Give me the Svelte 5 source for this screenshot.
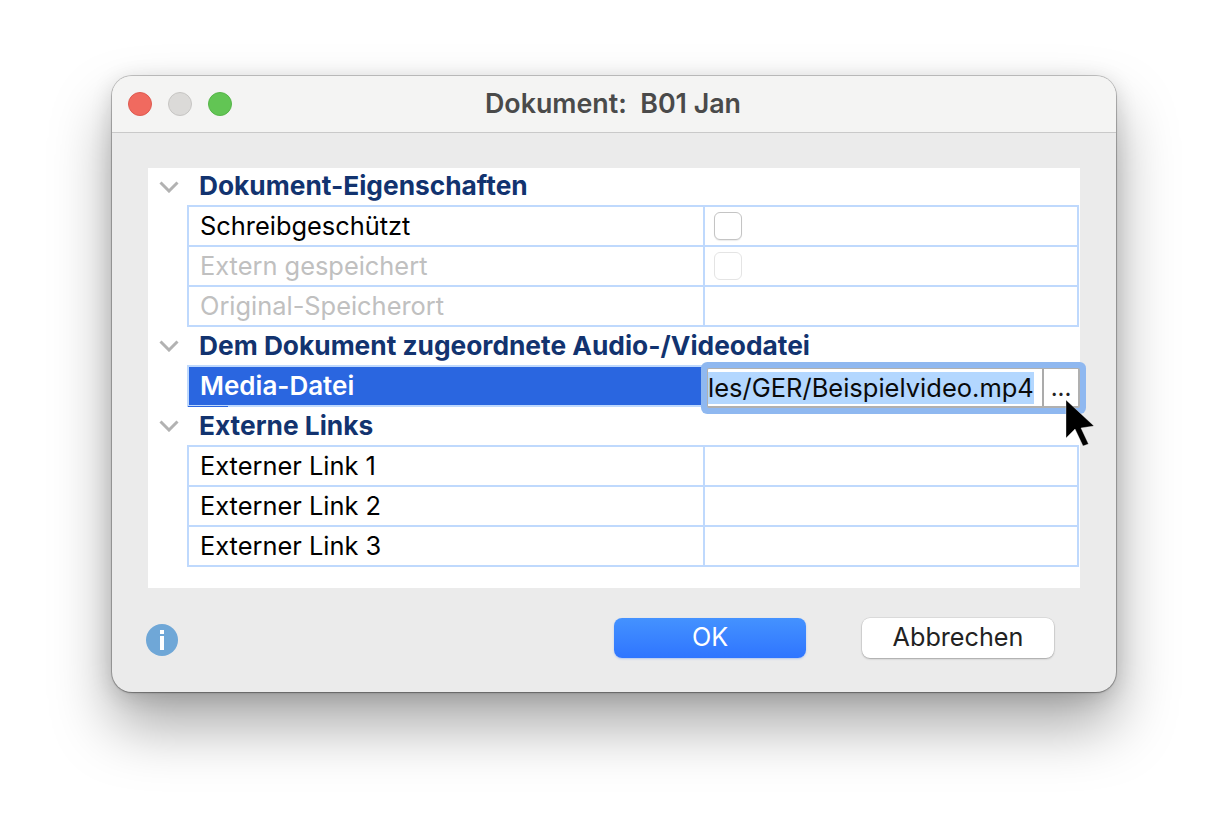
<script>
  const groups = [
    { title: 'Dokument-Eigenschaften', rows: [
      { label: 'Schreibgeschützt', check: true },
      { label: 'Extern gespeichert', check: true, off: true },
      { label: 'Original-Speicherort', off: true }
    ]},
    { title: 'Dem Dokument zugeordnete Audio-/Videodatei', rows: [
      { label: 'Media-Datei', active: true }
    ]},
    { title: 'Externe Links', rows: [
      { label: 'Externer Link 1' },
      { label: 'Externer Link 2' },
      { label: 'Externer Link 3' }
    ]}
  ];
</script>

<div class="page">
  <div class="window">
    <header class="titlebar">
      <div class="lights">
        <span class="light red"></span>
        <span class="light gray"></span>
        <span class="light green"></span>
      </div>
      <div class="title">Dokument:  B01 Jan</div>
    </header>
    <main class="content">
      <section class="panel">
        {#each groups as g}
          <div class="grouphead">
            <svg class="chev" width="20" height="12" viewBox="0 0 20 12"><path d="M1.500 1.500 L10 10 L18.500 1.500" fill="none" stroke="#b2b2b2" stroke-width="3"/></svg>
            <span class="headtext">{g.title}</span>
          </div>
          <div class="table">
            {#each g.rows as r}
              <div class="row" class:off={r.off} class:active={r.active}>
                <div class="name">{r.label}</div>
                <div class="val">
                  {#if r.check}<span class="check"></span>{/if}
                </div>
                {#if r.active}
                  <span class="underline"></span>
                  <div class="editor">
                    <div class="field"><span class="sel">les/GER/Beispielvideo.mp4</span></div>
                    <div class="dots">...</div>
                  </div>
                  <svg class="cursor" width="32" height="50" viewBox="0 0 32 50"><path d="M2 1 V39 L11 30 L19 47 L24.500 45 L17 29 L30 27 Z" fill="#000" stroke="#fff" stroke-opacity=".35" stroke-width="1"/></svg>
                {/if}
              </div>
            {/each}
          </div>
        {/each}
      </section>
      <footer class="foot">
        <svg class="info" width="32" height="32" viewBox="0 0 32 32"><circle cx="16" cy="16" r="16" fill="#6fa7d7"/><rect x="14" y="6" width="4" height="4" fill="#fff"/><rect x="14" y="12" width="4" height="14" fill="#fff"/></svg>
        <div class="btns">
          <button class="btn ok">OK</button>
          <button class="btn cancel">Abbrechen</button>
        </div>
      </footer>
    </main>
  </div>
</div>

<style>
  :global(body) { margin: 0; background: #fff; }
  .page {
    width: 1228px; height: 840px; box-sizing: border-box; overflow: hidden;
    padding: 76px 112px 0;
    font-family: Inter, "Liberation Sans", sans-serif;
  }
  .window {
    width: 1004px; height: 616px; box-sizing: border-box;
    border-radius: 20px; background: #ebebeb; overflow: hidden;
    box-shadow: 0 0 0 1px rgba(0,0,0,.2), 0 1px 2px rgba(0,0,0,.25), 0 34px 60px rgba(0,0,0,.34), 0 4px 22px rgba(0,0,0,.14);
    display: flex; flex-direction: column;
  }
  .titlebar {
    height: 57px; flex: none; box-sizing: border-box; position: relative;
    background: #f4f4f3; border-bottom: 1px solid #c9c9c9;
    display: flex; align-items: center; justify-content: center;
  }
  .lights { position: absolute; left: 16px; top: 16px; display: flex; gap: 16px; }
  .light { width: 24px; height: 24px; border-radius: 50%; box-sizing: border-box; border: 1px solid; }
  .red { background: #f06a5f; border-color: #de5a50; }
  .gray { background: #dbdad8; border-color: #c6c5c3; }
  .green { background: #62c554; border-color: #55b548; }
  .title { font-size: 26.800px; font-weight: 600; color: #4a4a4a; white-space: pre; margin-top: -3px; margin-right: 2px; }
  .content { flex: 1; display: flex; flex-direction: column; padding: 35px 36px 0; }
  .panel { background: #fff; height: 420px; flex: none; padding-right: 1px; box-sizing: border-box; }
  .grouphead {
    height: 38px; display: flex; align-items: center; color: #12336f;
    font-size: 26.300px; font-weight: 700;
  }
  .grouphead:first-child { height: 37px; }
  .headtext { margin-top: -2px; }
  .chev { margin-left: 11px; margin-right: 20px; flex: none; }
  .table {
    margin-left: 39px; border: 2px solid #bfd9fd;
    display: flex; flex-direction: column; gap: 2px; background: #bfd9fd;
  }
  .row {
    position: relative; height: 38px; display: grid; grid-template-columns: 514px 1fr; column-gap: 2px;
    font-size: 25.400px; color: #000;
  }
  .row.off { color: #c0c0c0; }
  .name { background: #fff; padding: 0 0 2px 11px; display: flex; align-items: center; }
  .val { background: #fff; display: flex; align-items: center; padding-left: 9px; }
  .check {
    width: 28px; height: 28px; box-sizing: border-box; border: 1px solid #c4c4c4; border-radius: 6px; background: #fff;
    box-shadow: 0 1px 1px rgba(0,0,0,.08);
  }
  .off .check { border-color: #e4e4e4; box-shadow: none; }
  .active .name { background: #2a66e0; color: #fff; font-weight: 600; font-size: 26px; }
  .underline { position: absolute; left: -1px; bottom: -2px; width: 40px; height: 1px; background: #2a66e0; }
  .editor {
    position: absolute; left: 518px; top: 1px; width: 373px; height: 40px; box-sizing: border-box;
    background: #fff; border: 2px solid #b0b0b0; border-left-width: 1px; border-top-width: 1px; display: flex; color: #0a0a0a;
    box-shadow: 0 0 0 6px #8fb8f0; border-radius: 2px;
  }
  .field { width: 336px; flex: none; box-sizing: border-box; border-right: 2px solid #ababab; overflow: hidden; padding-top: 3px; }
  .sel { display: block; width: 326px; height: 32px; background: #b3d7ff; font-size: 25.500px; line-height: 32px; overflow: hidden; white-space: nowrap; }
  .dots { flex: 1; text-align: center; color: #222; font-size: 24px; line-height: 38px; }
  .cursor { position: absolute; left: 875px; top: 32px; }
  .foot { flex: 1; position: relative; }
  .info { position: absolute; left: -2px; top: 36px; }
  .btns { position: absolute; left: 466px; top: 30px; display: flex; gap: 56px; }
  .btn {
    width: 192px; height: 40px; border-radius: 8px; border: 0; padding: 0 0 2px; font-family: inherit; font-size: 25.200px; line-height: 38px;
  }
  .ok { background: linear-gradient(#4492ff, #2f75ff); color: #fff; box-shadow: 0 1px 2px rgba(47,117,255,.3); }
  .cancel { background: #fff; color: #222; box-shadow: 0 0 0 .5px rgba(0,0,0,.12), 0 1px 2px rgba(0,0,0,.25); }
</style>
